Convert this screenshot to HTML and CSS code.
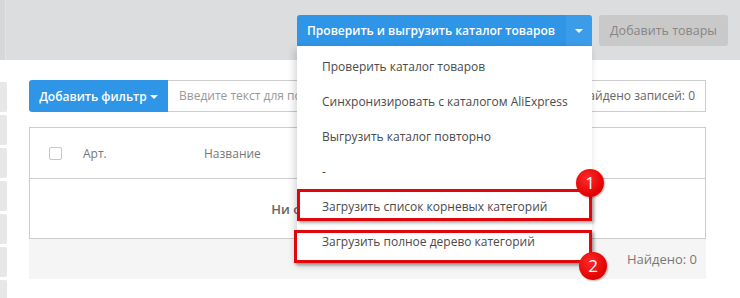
FILE: index.html
```html
<!DOCTYPE html>
<html lang="ru">
<head>
<meta charset="utf-8">
<link rel="stylesheet" href="styles.css">
</head>
<body>
<div class="page">
  <header class="topbar">
    <div class="split">
      <button class="split-main">Проверить и выгрузить каталог товаров</button>
      <button class="split-caret"><span class="caret"></span></button>
    </div>
    <button class="btn-gray">Добавить товары</button>
  </header>
  <div class="main">
    <aside class="side">
      <div class="tile"></div><div class="tile"></div><div class="tile"></div><div class="tile"></div><div class="tile"></div><div class="tile"></div><div class="tile"></div>
    </aside>
    <section class="content">
      <div class="toolbar">
        <button class="btn-filter">Добавить фильтр <span class="caret"></span></button>
        <div class="search">Введите текст для поиска</div>
        <div class="count">Найдено записей: 0</div>
      </div>
      <div class="table">
        <div class="thead">
          <span class="check"></span>
          <span class="col-art">Арт.</span>
          <span class="col-name">Название</span>
        </div>
        <div class="empty">Ни одной записи не найдено</div>
      </div>
      <div class="tfoot">Найдено: 0</div>
    </section>
  </div>

  <ul class="menu">
    <li>Проверить каталог товаров</li>
    <li>Синхронизировать с каталогом AliExpress</li>
    <li>Выгрузить каталог повторно</li>
    <li>-</li>
    <li>Загрузить список корневых категорий</li>
    <li>Загрузить полное дерево категорий</li>
  </ul>
  <div class="mark mark1"></div>
  <div class="mark mark2"></div>
  <div class="badge badge1">1</div>
  <div class="badge badge2">2</div>
</div>
</body>
</html>
```
FILE: styles.css
```css
* { box-sizing: border-box; }
html, body { margin: 0; padding: 0; background: #fff; }
body { font-family: "Open Sans", "Noto Sans", sans-serif; font-size: 12px; color: #555; }
.page { position: relative; width: 740px; height: 298px; overflow: hidden; }

.topbar {
  height: 60px;
  background: #dcdddf;
  display: flex;
  justify-content: flex-end;
  align-items: flex-start;
  gap: 7px;
  padding: 15px 12px 0 0;
  border-left: 5px solid #d6d7d9;
  box-shadow: inset 1px 0 0 #e2e3e4;
}
button { font-family: inherit; border: 0; margin: 0; cursor: pointer; white-space: nowrap; }
.split { display: flex; height: 31px; }
.split-main {
  width: 269px; height: 31px;
  background: #2f95e7; color: #fff;
  font-weight: 600; font-size: 12px;
  border-radius: 3px 0 0 0;
  text-align: left; padding: 0 0 0 10px;
}
.split-caret {
  width: 26px; height: 31px;
  background: #3b9cea;
  border-radius: 0 3px 0 0;
  display: flex; align-items: center; justify-content: center;
  padding: 0;
}
.caret {
  display: inline-block; width: 0; height: 0;
  border-left: 4px solid transparent; border-right: 4px solid transparent;
  border-top: 4px solid #fff;
  vertical-align: middle;
}
.btn-gray {
  width: 129px; height: 31px;
  background: #c9c9ca; color: #868686;
  font-size: 12.5px; border-radius: 3px;
  padding: 0;
}

.main { display: flex; }
.side { width: 7px; padding-top: 22px; display: flex; flex-direction: column; gap: 3px; }
.tile { height: 30px; background: #e7e7e7; border-radius: 0 2px 2px 0; }
.content { width: 677px; margin-left: 22px; padding-top: 20px; }

.toolbar { display: flex; height: 32px; }
.btn-filter {
  width: 139px; height: 32px;
  background: #2f95e7; color: #fff;
  font-weight: 600; font-size: 12px;
  border-radius: 3px 0 0 3px;
  padding: 0;
}
.search {
  flex: 1;
  border: 1px solid #ccc; border-left: 0;
  color: #999; padding: 0 0 0 11px;
  line-height: 30px; white-space: nowrap; overflow: hidden;
}
.count {
  width: 136px;
  border: 1px solid #ccc; border-left: 0;
  line-height: 30px; text-align: right; padding-right: 10px;
  color: #666; white-space: nowrap;
}

.table { margin-top: 15px; border: 1px solid #ccc; border-bottom: 0; }
.thead {
  height: 51px; border-bottom: 1px solid #ccc;
  display: flex; align-items: center;
  color: #777;
}
.check {
  width: 13px; height: 13px; border: 1px solid #c6c6c6; border-radius: 2px;
  margin-left: 19px; margin-right: 21px;
}
.col-art { width: 121px; }
.empty {
  height: 60px; line-height: 60px; text-align: center;
  font-weight: 600; color: #666; font-size: 13px;
  border-bottom: 1px solid #ccc;
}
.tfoot {
  height: 40px; background: #f5f5f5;
  text-align: right; line-height: 40px; padding-right: 9px;
  color: #777; font-size: 13px;
}

.menu {
  position: absolute; left: 297px; top: 46px; width: 295px;
  margin: 0; padding: 3px 0;
  list-style: none; background: #fff;
  box-shadow: -2px 3px 8px rgba(0,0,0,0.18);
}
.menu li { height: 35px; line-height: 35px; padding-left: 25px; color: #4a4a4a; white-space: nowrap; }

.mark {
  position: absolute;
  border: 3px solid #e0060b;
  box-shadow: 2px 2px 3px rgba(0,0,0,0.35);
}
.mark1 { left: 297px; top: 189px; width: 295px; height: 32px; }
.mark2 { left: 294px; top: 230px; width: 298px; height: 33px; }

.badge {
  position: absolute; width: 28px; height: 28px; border-radius: 50%;
  background: radial-gradient(circle at 40% 35%, #ff2a2a, #e00000 70%);
  color: #fff; font-size: 17px; line-height: 28px; text-align: center;
  box-shadow: 1px 1px 2px rgba(0,0,0,0.3);
}
.badge1 { left: 576px; top: 169px; }
.badge2 { left: 579px; top: 252px; }
```
